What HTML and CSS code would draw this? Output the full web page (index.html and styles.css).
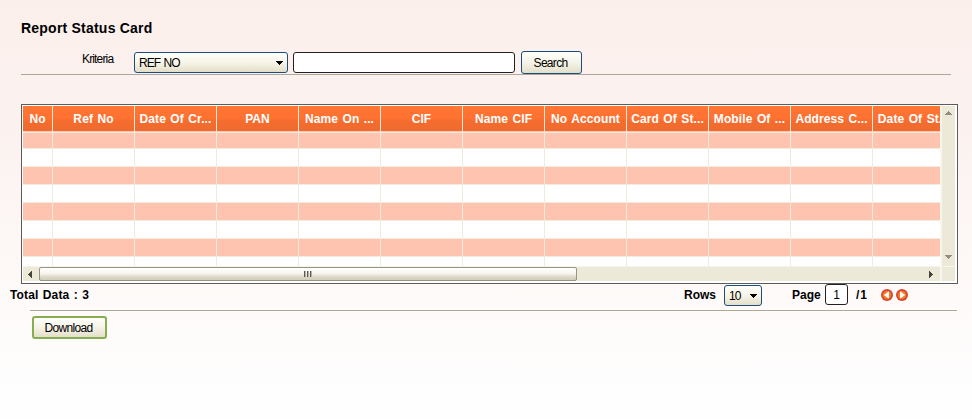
FILE: index.html
```html
<!DOCTYPE html>
<html lang="id">
<head>
<meta charset="utf-8">
<title>Report Status Card</title>
<link rel="stylesheet" href="styles.css">
</head>
<body>
<h1 class="title"><span>Report Status Card</span></h1>
<form class="criteria">
  <label class="criteria-label">Kriteria</label>
  <div class="select select-field"><span>REF NO</span><svg class="caret" viewBox="0 0 7 4"><path d="M0 0H7V1H6V2H5V3H4V4H3V3H2V2H1V1H0Z"/></svg></div>
  <div class="textbox"></div>
  <div class="button search"><span>Search</span></div>
</form>
<main class="grid">
  <div class="viewport">
    <div class="row head">
      <div class="cell"><span>No</span></div><div class="cell"><span>Ref No</span></div><div class="cell"><span>Date Of Cr...</span></div><div class="cell"><span>PAN</span></div><div class="cell"><span>Name On ...</span></div><div class="cell"><span>CIF</span></div><div class="cell"><span>Name CIF</span></div><div class="cell"><span>No Account</span></div><div class="cell"><span>Card Of St...</span></div><div class="cell"><span>Mobile Of ...</span></div><div class="cell"><span>Address C...</span></div><div class="cell"><span>Date Of St...</span></div>
    </div>
    <div class="row"><div class="cell"></div><div class="cell"></div><div class="cell"></div><div class="cell"></div><div class="cell"></div><div class="cell"></div><div class="cell"></div><div class="cell"></div><div class="cell"></div><div class="cell"></div><div class="cell"></div><div class="cell"></div></div>
    <div class="row"><div class="cell"></div><div class="cell"></div><div class="cell"></div><div class="cell"></div><div class="cell"></div><div class="cell"></div><div class="cell"></div><div class="cell"></div><div class="cell"></div><div class="cell"></div><div class="cell"></div><div class="cell"></div></div>
    <div class="row"><div class="cell"></div><div class="cell"></div><div class="cell"></div><div class="cell"></div><div class="cell"></div><div class="cell"></div><div class="cell"></div><div class="cell"></div><div class="cell"></div><div class="cell"></div><div class="cell"></div><div class="cell"></div></div>
    <div class="row"><div class="cell"></div><div class="cell"></div><div class="cell"></div><div class="cell"></div><div class="cell"></div><div class="cell"></div><div class="cell"></div><div class="cell"></div><div class="cell"></div><div class="cell"></div><div class="cell"></div><div class="cell"></div></div>
    <div class="row"><div class="cell"></div><div class="cell"></div><div class="cell"></div><div class="cell"></div><div class="cell"></div><div class="cell"></div><div class="cell"></div><div class="cell"></div><div class="cell"></div><div class="cell"></div><div class="cell"></div><div class="cell"></div></div>
    <div class="row"><div class="cell"></div><div class="cell"></div><div class="cell"></div><div class="cell"></div><div class="cell"></div><div class="cell"></div><div class="cell"></div><div class="cell"></div><div class="cell"></div><div class="cell"></div><div class="cell"></div><div class="cell"></div></div>
    <div class="row"><div class="cell"></div><div class="cell"></div><div class="cell"></div><div class="cell"></div><div class="cell"></div><div class="cell"></div><div class="cell"></div><div class="cell"></div><div class="cell"></div><div class="cell"></div><div class="cell"></div><div class="cell"></div></div>
    <div class="row"><div class="cell"></div><div class="cell"></div><div class="cell"></div><div class="cell"></div><div class="cell"></div><div class="cell"></div><div class="cell"></div><div class="cell"></div><div class="cell"></div><div class="cell"></div><div class="cell"></div><div class="cell"></div></div>
  </div>
  <div class="vscroll">
    <svg class="arrow-v" viewBox="0 0 7 4"><path d="M3 0H4V1H5V2H6V3H7V4H0V3H1V2H2V1H3Z"/></svg>
    <svg class="arrow-v" viewBox="0 0 7 4"><path d="M0 0H7V1H6V2H5V3H4V4H3V3H2V2H1V1H0Z"/></svg>
  </div>
  <div class="hscroll">
    <svg class="arrow-h" viewBox="0 0 4 7"><path d="M4 0V7H3V6H2V5H1V4H0V3H1V2H2V1H3V0Z"/></svg>
    <div class="thumb"><i></i><i></i><i></i></div>
    <svg class="arrow-h next" viewBox="0 0 4 7"><path d="M0 0V7H1V6H2V5H3V4H4V3H3V2H2V1H1V0Z"/></svg>
  </div>
  <div class="corner"></div>
</main>
<div class="pager">
  <b class="total">Total Data : 3</b>
  <b class="rows">Rows</b>
  <div class="select select-rows"><span>10</span><svg class="caret" viewBox="0 0 7 4"><path d="M0 0H7V1H6V2H5V3H4V4H3V3H2V2H1V1H0Z"/></svg></div>
  <b class="page">Page</b>
  <div class="textbox page-no">1</div>
  <b class="of">/1</b>
  <svg class="nav" viewBox="0 0 12 12"><circle cx="6" cy="6" r="6" fill="#d84430"/><circle cx="6" cy="6" r="4.3" fill="#f47a25"/><path d="M8 2.2V9.8L2.8 6Z" fill="#fff"/></svg>
  <svg class="nav" viewBox="0 0 12 12"><circle cx="6" cy="6" r="6" fill="#d84430"/><circle cx="6" cy="6" r="4.3" fill="#f47a25"/><path d="M4 2.2V9.8L9.2 6Z" fill="#fff"/></svg>
</div>
<footer class="actions"><div class="button download"><span>Download</span></div></footer>
</body>
</html>
```

FILE: styles.css
```css
* { box-sizing: border-box; }
body {
  margin: 0;
  height: 419px;
  overflow: hidden;
  background: linear-gradient(#fbefeb 0, #fbf1ee 90px, #fdf7f5 240px, #fefbfa 320px, #fefefe 400px);
  font: 12px/14px "Liberation Sans", Arial, sans-serif;
  color: #000;
}
svg { display: block; flex: none; }
.title { margin: 0; padding: 20px 0 0 21px; height: 50px; font-size: 14px; line-height: 17px; letter-spacing: .22px; }
.criteria {
  display: flex;
  width: 930px;
  height: 25px;
  margin: 0 0 0 21px;
  border-bottom: 1px solid #aca899;
}
.criteria-label { width: 113px; padding: 2px 0 0 61px; letter-spacing: -.85px; white-space: nowrap; }
.select {
  display: flex;
  align-items: center;
  justify-content: space-between;
  padding: 1px 4px 0;
  border: 1px solid #1d4c7c;
  border-radius: 3px;
  background: linear-gradient(#fffffb, #f7f5e8 50%, #e3dec9);
}
.select-field { width: 154px; height: 21px; margin-top: 2px; letter-spacing: -.95px; word-spacing: 1px; }
.caret { width: 7px; height: 4px; shape-rendering: crispEdges; }
.textbox { width: 222px; height: 21px; margin: 2px 0 0 5px; border: 1px solid #222; border-radius: 3px; background: #fff; }
.button {
  display: flex;
  align-items: center;
  justify-content: center;
  border: 1px solid #1d4c7c;
  border-radius: 3px;
  background: linear-gradient(#fffffb, #f5f3e7 50%, #e4dfcb);
}
.search { width: 61px; height: 23px; margin: 1px 0 0 6px; padding: 1px 2px 0 0; letter-spacing: -.7px; }
.grid {
  display: grid;
  grid-template: 160px 15px / 917px 15px;
  width: 937px;
  height: 180px;
  margin: 29px 0 0 21px;
  padding: 1px;
  border: 1px solid #5c5c5c;
  background: #fff;
}
.viewport { overflow: hidden; }
.row {
  display: grid;
  grid-template-columns: 30px repeat(11, 82px);
  width: 932px;
  height: 18px;
  background: #fff;
}
.row:nth-child(even) { background: #ffc4b0; }
.cell { border-right: 1px solid #efecde; border-bottom: 1px solid #efecde; }
.row.head {
  height: 25px;
  background: linear-gradient(#ff7634, #ff7131 50%, #f46d2f 60%, #f16a2e);
  color: #fff;
  font-weight: bold;
  line-height: 26px;
  letter-spacing: .1px;
  word-spacing: 1px;
  text-align: center;
  white-space: nowrap;
}
.vscroll { display: flex; flex-direction: column; align-items: center; justify-content: space-between; padding: 5px 0 7px; border-left: 2px solid #f8f7ef; background: #ece9d8; }
.arrow-v { width: 7px; height: 4px; fill: #918e80; shape-rendering: crispEdges; }
.arrow-h { width: 4px; height: 7px; fill: #45433b; shape-rendering: crispEdges; }
.hscroll { display: flex; align-items: center; padding: 0 7px 0 5px; border-top: 1px solid #f6f4ea; background: #ece9d8; }
.thumb {
  display: flex;
  align-items: center;
  justify-content: center;
  gap: 1px;
  width: 538px;
  height: 14px;
  margin-left: 7px;
  border: 1px solid #989584;
  border-radius: 2px;
  background: linear-gradient(#fff, #f7f5ee 45%, #dcd8c8 75%, #d2cdb9);
}
.thumb i { width: 2px; height: 6px; border-left: 1px solid #5d5b50; border-right: 1px solid #b5b2a5; }
.next { margin-left: auto; }
.corner { border: solid #f8f7ef; border-width: 1px 0 0 2px; background: #ece9d8; }
.pager { display: flex; height: 26px; padding-left: 10px; line-height: 14px; }
.pager b { padding-top: 4px; white-space: nowrap; }
.total { width: 674px; letter-spacing: .15px; word-spacing: .8px; }
.rows { width: 40px; }
.select-rows { width: 38px; height: 21px; margin-top: 1px; letter-spacing: -.8px; }
.page { width: 33px; margin-left: 30px; }
.textbox.page-no { width: 23px; height: 21px; margin: 0; text-align: center; line-height: 20px; }
.pager .of { width: 33px; padding-left: 8px; letter-spacing: 1px; }
.nav { width: 12px; height: 12px; margin-top: 5px; }
.nav + .nav { margin-left: 3px; }
.actions { width: 927px; margin-left: 30px; padding: 5px 0 0 2px; border-top: 1px solid #aca899; }
.download { width: 75px; height: 23px; padding-right: 2px; border: 2px solid #87ad52; letter-spacing: -.7px; }
```
